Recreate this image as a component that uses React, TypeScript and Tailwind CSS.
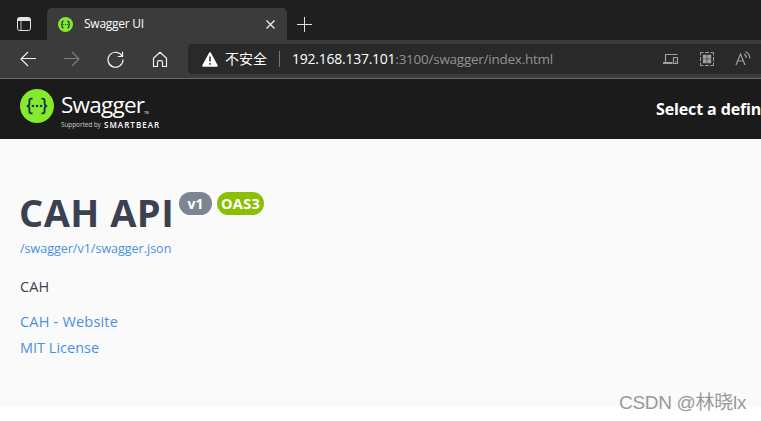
import React from "react";

const stroke = { fill: "none", stroke: "currentColor" } as const;

function TabActionsIcon() {
  return (
    <svg width="16" height="16" viewBox="0 0 16 16" className="text-[#e4e4e4]">
      <rect x="1.5" y="1.5" width="13" height="13" rx="2.2" {...stroke} />
      <path d="M1.5 5V3.7C1.5 2.3 2.3 1.5 3.7 1.5h8.6c1.4 0 2.2.8 2.2 2.2V5z" fill="currentColor" />
      <path d="M5 5v9.5" {...stroke} strokeWidth=".8" />
    </svg>
  );
}

function SwaggerMark({ size, small }: { size: number; small?: boolean }) {
  return (
    <svg width={size} height={size} viewBox="0 0 34 34" className="shrink-0">
      <circle cx="17" cy="17" r="17" fill="#85ea2d" />
      <g fill="none" stroke="#173647" strokeWidth={small ? 2.8 : 1.9}>
        <path d="M12.6 9.6h-1c-1.6 0-2.2.8-2.2 2.2v2.4c0 1.7-.7 2.8-2.6 2.8 1.9 0 2.6 1.1 2.6 2.8v2.4c0 1.4.6 2.2 2.2 2.2h1" />
        <path d="M21.4 9.6h1c1.6 0 2.2.8 2.2 2.2v2.4c0 1.7.7 2.8 2.6 2.8-1.9 0-2.6 1.1-2.6 2.8v2.4c0 1.4-.6 2.2-2.2 2.2h-1" />
      </g>
      <g fill="#173647">
        <circle cx="12.9" cy="17" r="1.3" />
        <circle cx="17" cy="17" r="1.3" />
        <circle cx="21.1" cy="17" r="1.3" />
      </g>
    </svg>
  );
}

function TabStrip() {
  return (
    <div className="flex h-10 items-end bg-[#1f1f1f]">
      <div className="flex h-8 w-[47px] items-center pl-4">
        <TabActionsIcon />
      </div>
      <div className="flex h-8 w-[240px] items-center rounded-t-[5px] bg-[#3b3b3b] pl-[11px] pr-3">
        <SwaggerMark size={15} small />
        <span className="ml-[11px] text-[12px] leading-4 tracking-[-0.25px] text-white">Swagger UI</span>
        <svg width="9" height="9" viewBox="0 0 9 9" className="ml-auto text-[#eee]">
          <path d="M.5.5l8 8M8.5.5l-8 8" {...stroke} strokeWidth="1.3" />
        </svg>
      </div>
      <div className="flex h-8 items-center pl-[10px]">
        <svg width="15" height="15" viewBox="0 0 15 15" className="text-[#e0e0e0]">
          <path d="M7.5 0v15M0 7.5h15" {...stroke} />
        </svg>
      </div>
    </div>
  );
}

function Toolbar() {
  return (
    <div className="flex h-[39px] items-center border-b border-[#6a6a6a] bg-[#3b3b3b] pl-5 text-[#f0f0f0]">
      <svg width="16" height="16" viewBox="0 0 16 16">
        <path d="M8 1L1 8l7 7M1 7.5h15" {...stroke} strokeWidth="1.2" />
      </svg>
      <svg width="16" height="16" viewBox="0 0 16 16" className="ml-7 text-[#7c7c7c]">
        <path d="M8 1l7 7-7 7M15 7.5H0" {...stroke} strokeWidth="1.2" />
      </svg>
      <svg width="17" height="17" viewBox="0 0 17 17" className="ml-[27px]">
        <path d="M15.1 5.2A7.5 7.5 0 1 0 16 8.5M15.5.8v4.7h-4.7" {...stroke} strokeWidth="1.2" />
      </svg>
      <svg width="16" height="17" viewBox="0 0 16 17" className="ml-7">
        <path d="M1.500 7.200L8 1.300l6.500 5.900v8.300h-4v-4.200c0-1-.6-1.600-1.600-1.600H7.100c-1 0-1.600.6-1.600 1.600v4.200h-4z" {...stroke} strokeWidth="1.200" strokeLinejoin="round" />
      </svg>
      <div className="ml-5 flex h-[30px] flex-1 items-center rounded-l-[4px] bg-[#292929] pl-[14px]">
        <svg width="16" height="15" viewBox="0 0 16 15">
          <path d="M8 1.200L14.800 13.700H1.200z" fill="#fff" stroke="#fff" strokeWidth="2" strokeLinejoin="round" />
          <path d="M8 4.500v5M8 11v1.700" stroke="#292929" strokeWidth="1.500" />
        </svg>
        <span className="mb-[2px] ml-[7px] w-11 whitespace-nowrap font-['Noto_Sans_CJK_SC',sans-serif] text-[14px] leading-5 text-white">不安全</span>
        <span className="ml-[10px] h-4 w-px bg-[#777]" />
        <span className="ml-3 w-[300px] whitespace-nowrap text-[14px] leading-5 text-[#929292]">
          <span className="tracking-[-0.25px] text-white">192.168.137.101</span>
          <span className="text-[13.500px] tracking-[-0.250px]">:3100/swagger/index.html</span>
        </span>
        <div className="ml-auto flex items-center pr-[10px] text-[#a0a0a0]">
          <svg width="16" height="12" viewBox="0 0 16 12">
            <path d="M2.500 9V1.500H14.500M10.500 4.500h4v6h-4z" {...stroke} strokeWidth="1.200" />
            <path d="M0 9h9.500v2H0zM12 8.500h1.500v1H12z" fill="currentColor" />
          </svg>
          <svg width="14" height="14" viewBox="0 0 14 14" className="ml-[21px]">
            <path d="M.5 3.500v-3h3M5 .5h4M10.500.5h3v3M13.500 5v4M13.500 10.500v3h-3M9 13.500H5M3.500 13.500h-3v-3M.5 9V5" {...stroke} />
            <path d="M2.800 2.800h3.900v3.900H2.800zM7.300 2.800h3.900v3.900H7.300zM2.800 7.300h3.900v3.900H2.800zM7.300 7.300h3.900v3.900H7.300z" fill="currentColor" />
          </svg>
          <svg width="16" height="15" viewBox="0 0 16 15" className="mb-px ml-[21px]">
            <path d="M1 14L5.500 3 10 14M2.600 10h5.800" {...stroke} strokeWidth="1.200" />
            <path d="M9 3c1.600.8 2.400 2.200 2.200 4M10.500.8c2.900 1.200 4.500 3.600 4.200 6.800" {...stroke} strokeWidth="1.200" />
          </svg>
        </div>
      </div>
    </div>
  );
}

function Header() {
  return (
    <header className="flex h-[60px] items-center justify-between bg-[#1b1b1b] text-white">
      <div className="flex h-[60px] items-start pl-5 pt-[10px]">
        <SwaggerMark size={34} />
        <div className="ml-[7px]">
          <div className="flex h-8 items-start whitespace-nowrap">
            <span className="text-[22.500px] leading-8 tracking-[-0.750px]">Swagger</span>
            <span className="mt-[23px] text-[3px] leading-[3px]">TM</span>
          </div>
          <div className="flex h-2 items-center whitespace-nowrap leading-2">
            <span className="w-[43px] text-[6.500px] tracking-[-0.100px] text-[#ccc]">Supported by</span>
            <span className="text-[8px] font-semibold tracking-[1.050px]">SMARTBEAR</span>
          </div>
        </div>
      </div>
      <div className="w-[105px] overflow-hidden whitespace-nowrap text-[16px] font-bold leading-6 tracking-[-0.120px]">Select a defin</div>
    </header>
  );
}

export default function App() {
  return (
    <div className="h-[421px] w-[761px] overflow-hidden bg-white font-['Open_Sans','Noto_Sans',sans-serif]">
      <TabStrip />
      <Toolbar />
      <Header />
      <main className="h-[268px] bg-[#fafafa] pl-5 pt-12 text-[14.500px]">
        <div className="flex h-[51px] items-start whitespace-nowrap text-[#3b4151]">
          <h1 className="-ml-px w-[155px] text-[38px] font-bold leading-[50px] tracking-[0.450px]">CAH API</h1>
          <div className="ml-[5px] mt-[5px] flex gap-[5px] text-[14px] font-bold leading-[23px] text-white">
            <span className="h-[23px] w-[33px] rounded-full bg-[#7d8492] text-center">v1</span>
            <span className="h-[23px] w-[47px] rounded-full bg-[#89bf04] text-center text-[14.500px] tracking-[0.300px]">OAS3</span>
          </div>
        </div>
        <a className="block h-[23px] text-[12.500px] leading-[22px] text-[#4990e2]">/swagger/v1/swagger.json</a>
        <p className="mt-[14px] h-6 leading-6 tracking-[0.100px] text-[#3b4151]">CAH</p>
        <a className="mt-[11px] block h-[26px] leading-6 tracking-[0.200px] text-[#4990e2]">CAH - Website</a>
        <a className="block h-6 leading-6 text-[#4990e2]">MIT License</a>
      </main>
      <div className="absolute left-[619px] top-[389px] whitespace-nowrap font-['Liberation_Sans','Noto_Sans_CJK_SC',sans-serif] text-[19px] leading-7 tracking-[-0.300px] text-[#999]">CSDN @林晓lx</div>
    </div>
  );
}
